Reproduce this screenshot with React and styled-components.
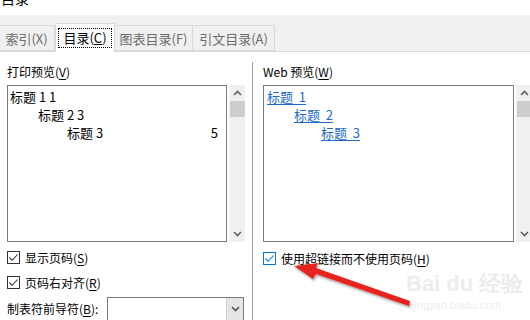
import React from 'react';
import styled, { createGlobalStyle } from 'styled-components';

const Global = createGlobalStyle`
  html, body { margin: 0; padding: 0; background: #fff; }
  body {
    width: 530px;
    height: 320px;
    overflow: hidden;
    font-family: "Microsoft YaHei", "Noto Sans CJK SC", sans-serif;
    font-size: 12px;
    color: #000;
  }
`;

const Dialog = styled.div`
  position: relative;
  width: 530px;
  height: 320px;
  overflow: hidden;
  display: flex;
  flex-direction: column;
`;

const TitleBar = styled.div`
  flex-shrink: 0;
  height: 15px;
  background: #fff;
  overflow: hidden;
  span {
    display: block;
    margin: -12px 0 0 1px;
    font-size: 14px;
    line-height: 20px;
  }
`;

const TabStrip = styled.div`
  flex-shrink: 0;
  height: 37px;
  background: #f0f0f0;
  display: flex;
  align-items: flex-end;
  border-bottom: 1px solid #d9d9d9;
  box-sizing: border-box;
`;

const Tab = styled.div`
  box-sizing: border-box;
  height: ${({ $active }) => ($active ? '29px' : '26px')};
  margin-bottom: ${({ $active }) => ($active ? '-1px' : '0')};
  width: ${({ $w }) => $w}px;
  background: ${({ $active }) => ($active ? '#fff' : '#f0f0f0')};
  border: 1px solid #d9d9d9;
  border-bottom: ${({ $active }) => ($active ? 'none' : '1px solid #d9d9d9')};
  border-left: ${({ $first }) => ($first ? 'none' : '1px solid #d9d9d9')};
  margin-left: ${({ $active }) => ($active ? '0' : '-1px')};
  color: ${({ $active }) => ($active ? '#000' : '#6b6b6b')};
  font-size: 13px;
  display: flex;
  align-items: center;
  justify-content: center;
  padding-top: ${({ $active }) => ($active ? '0' : '1px')};
  z-index: ${({ $active }) => ($active ? 1 : 0)};
`;

const Focus = styled.span`
  outline: 1px dotted #000;
  outline-offset: 0;
  padding: 1px 4px;
  line-height: 16px;
`;

const Body = styled.div`
  flex: 1;
  min-height: 0;
  overflow: hidden;
  display: grid;
  grid-template-columns: 252px 1px 1fr;
  background: #fff;
`;

const Column = styled.div`
  padding: 12px 0 0 ${({ $pl }) => $pl}px;
  display: flex;
  flex-direction: column;
`;

const Divider = styled.div`
  background: #a0a0a0;
  margin-top: 10px;
`;

const Label = styled.div`
  font-size: 12px;
  line-height: 16px;
  height: 16px;
  margin-bottom: 5px;
  white-space: nowrap;
  u { text-underline-offset: 2px; }
`;

const PreviewRow = styled.div`
  display: flex;
  gap: 1px;
  height: 157px;
  flex-shrink: 0;
`;

const Box = styled.div`
  box-sizing: border-box;
  width: ${({ $w }) => $w}px;
  height: 157px;
  border: 1px solid #7a7a7a;
  padding: 2px 0 0 2px;
  font-size: 13px;
`;

const Entry = styled.div`
  height: 18px;
  line-height: 18px;
  padding-left: ${({ $indent }) => $indent}px;
  display: flex;
  white-space: pre;
`;

const PageNum = styled.span`
  margin-left: auto;
  padding-right: 8px;
`;

const Link = styled.span`
  color: #1b6ac9;
  text-decoration: underline;
  text-underline-offset: 2px;
  white-space: pre;
`;

const Scrollbar = styled.div`
  width: 16px;
  margin-left: 1px;
  background: #f0f0f0;
  display: flex;
  flex-direction: column;
  align-items: center;
`;

const Arrow = styled.div`
  height: 16px;
  display: flex;
  align-items: center;
  justify-content: center;
  width: 16px;
`;

const Thumb = styled.div`
  width: 15px;
  height: 16px;
  background: #cdcdcd;
`;

const Spacer = styled.div`
  flex: 1;
`;

const CheckRow = styled.div`
  display: flex;
  align-items: center;
  gap: 5px;
  height: 14px;
  flex-shrink: 0;
  margin-top: ${({ $mt }) => $mt}px;
  font-size: 12px;
  white-space: nowrap;
  u { text-underline-offset: 2px; }
`;

const CheckBox = styled.div`
  box-sizing: border-box;
  width: 13px;
  height: 13px;
  border: 1px solid ${({ $blue }) => ($blue ? '#0078d7' : '#333')};
  background: #fff;
  display: flex;
  align-items: center;
  justify-content: center;
`;

const LeaderRow = styled.div`
  display: flex;
  align-items: flex-start;
  margin-top: 8px;
  flex-shrink: 0;
`;

const LeaderLabel = styled.div`
  width: 100px;
  padding-top: 4px;
  font-size: 12px;
  line-height: 16px;
  u { text-underline-offset: 2px; }
`;

const Select = styled.div`
  box-sizing: border-box;
  width: 137px;
  height: 30px;
  border: 1px solid #7a7a7a;
  display: flex;
  justify-content: flex-end;
`;

const SelectBtn = styled.div`
  width: 17px;
  background: #e5e5e5;
  border-left: 1px solid #cfcfcf;
  display: flex;
  justify-content: center;
  padding-top: 8px;
  box-sizing: border-box;
`;

const Overlay = styled.svg`
  position: absolute;
  left: 0;
  top: 0;
  pointer-events: none;
`;

const Watermark = styled.div`
  position: absolute;
  left: 406px;
  top: 272px;
  color: rgba(190, 190, 190, 0.3);
  font-family: "Liberation Sans", sans-serif;
  font-size: 22px;
  font-weight: bold;
  line-height: 24px;
  white-space: nowrap;
  small {
    display: block;
    font-size: 11px;
    font-weight: normal;
    line-height: 12px;
    margin: 3px 0 0 6px;
  }
`;

const Up = () => (
  <svg width="9" height="6" viewBox="0 0 9 6">
    <path d="M1 5 L4.5 1.5 L8 5" fill="none" stroke="#606060" strokeWidth="1.6" />
  </svg>
);

const Down = ({ color = '#606060' }) => (
  <svg width="9" height="6" viewBox="0 0 9 6">
    <path d="M1 1 L4.5 4.5 L8 1" fill="none" stroke={color} strokeWidth="1.6" />
  </svg>
);

const Tick = ({ color }) => (
  <svg width="11" height="11" viewBox="0 0 11 11">
    <path d="M1.5 5.5 L4.2 8.3 L9.5 2.5" fill="none" stroke={color} strokeWidth="1.1" />
  </svg>
);

const Scroll = () => (
  <Scrollbar>
    <Arrow><Up /></Arrow>
    <Thumb />
    <Spacer />
    <Arrow><Down /></Arrow>
  </Scrollbar>
);

const App = () => (
  <Dialog>
    <Global />
    <TitleBar><span>目录</span></TitleBar>
    <TabStrip>
      <Tab $w={56} $first>索引(X)</Tab>
      <Tab $w={60} $active><Focus>目录(<u>C</u>)</Focus></Tab>
      <Tab $w={79}>图表目录(F)</Tab>
      <Tab $w={83}>引文目录(A)</Tab>
    </TabStrip>
    <Body>
      <Column $pl={7}>
        <Label>打印预览(<u>V</u>)</Label>
        <PreviewRow>
          <Box $w={220}>
            <Entry $indent={0}>标题 1 1</Entry>
            <Entry $indent={28}>标题 2 3</Entry>
            <Entry $indent={57}>
              标题 3<PageNum>5</PageNum>
            </Entry>
          </Box>
          <Scroll />
        </PreviewRow>
        <CheckRow $mt={8}>
          <CheckBox><Tick color="#333" /></CheckBox>
          <span>显示页码(<u>S</u>)</span>
        </CheckRow>
        <CheckRow $mt={11}>
          <CheckBox><Tick color="#333" /></CheckBox>
          <span>页码右对齐(<u>R</u>)</span>
        </CheckRow>
        <LeaderRow>
          <LeaderLabel>制表符前导符(<u>B</u>):</LeaderLabel>
          <Select>
            <SelectBtn><Down color="#555" /></SelectBtn>
          </Select>
        </LeaderRow>
      </Column>
      <Divider />
      <Column $pl={10}>
        <Label>Web 预览(<u>W</u>)</Label>
        <PreviewRow>
          <Box $w={251}>
            <Entry $indent={1}><Link>标题  1</Link></Entry>
            <Entry $indent={28}><Link>标题  2</Link></Entry>
            <Entry $indent={55}><Link>标题  3</Link></Entry>
          </Box>
          <Scroll />
        </PreviewRow>
        <CheckRow $mt={9}>
          <CheckBox $blue><Tick color="#0078d7" /></CheckBox>
          <span>使用超链接而不使用页码(<u>H</u>)</span>
        </CheckRow>
      </Column>
    </Body>
    <Watermark>
      Bai du 经验
      <small>jingyan.baidu.com</small>
    </Watermark>
    <Overlay width="530" height="320" viewBox="0 0 530 320">
      <defs>
        <filter id="sh" x="-10%" y="-50%" width="120%" height="200%">
          <feDropShadow dx="1" dy="2" stdDeviation="1.2" floodColor="#000" floodOpacity="0.35" />
        </filter>
      </defs>
      <g filter="url(#sh)" fill="#e8231c">
        <path d="M409 306 L316 274 L313 279 L294 266 L318 263 L316 268 L410 301 Z" />
      </g>
    </Overlay>
  </Dialog>
);

export default App;
